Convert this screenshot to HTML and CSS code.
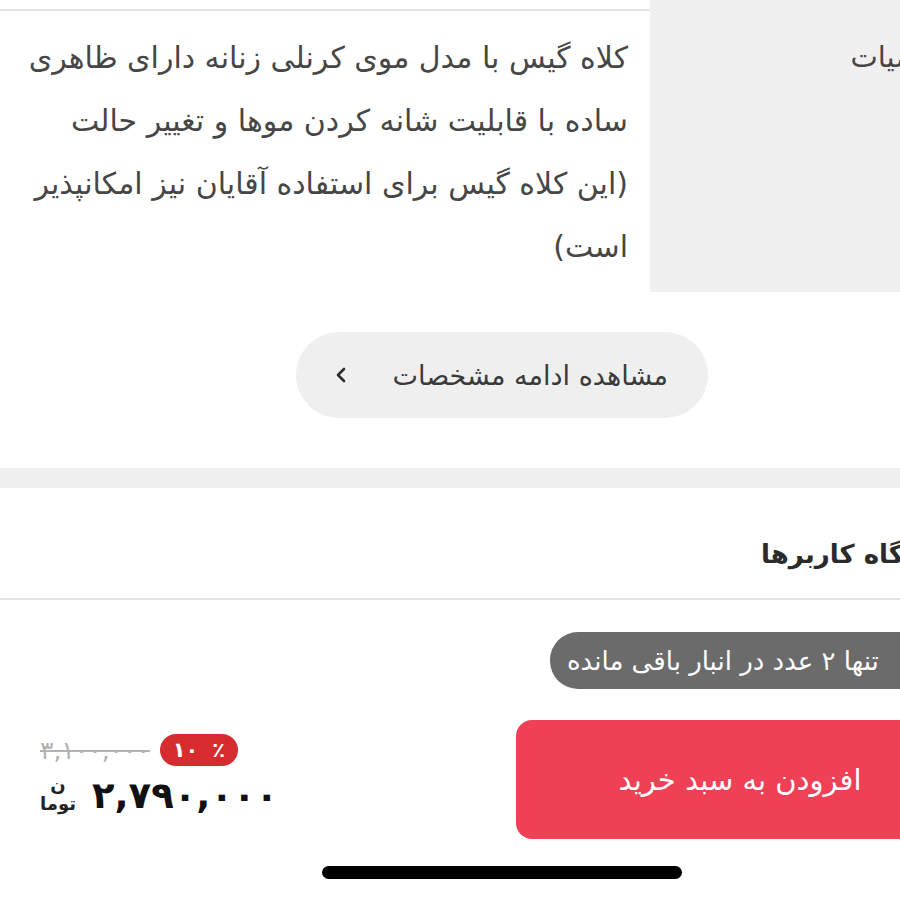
FILE: index.html
```html
<!DOCTYPE html>
<html lang="fa">
<head>
    <meta charset="UTF-8">
    <meta name="viewport" content="width=device-width, initial-scale=1.0">
    <title>کلاه گیس کرنلی زنانه</title>
    <link rel="stylesheet" href="styles.css">
</head>
<body>
    <div class="page">
        <div class="spec-row">
            <div class="spec-value">
                <p>کلاه گیس با مدل موی کرنلی زنانه دارای ظاهری<br>
                ساده با قابلیت شانه کردن موها و تغییر حالت<br>
                (این کلاه گیس برای استفاده آقایان نیز امکانپذیر<br>
                است)</p>
            </div>
            <div class="spec-title">خصوصیات</div>
        </div>

        <div class="more-wrap">
            <button class="more-btn">
                <svg width="14" height="20" viewBox="0 0 14 20"><path d="M10 4 L4 10 L10 16" fill="none" stroke="#2d2d2d" stroke-width="2.6" stroke-linecap="round" stroke-linejoin="round"/></svg>
                <span>مشاهده ادامه مشخصات</span>
            </button>
        </div>

        <div class="divider"></div>

        <div class="section-head">
            <h2>دیدگاه کاربرها</h2>
        </div>

        <div class="buy-box">
            <div class="stock-row">
                <div class="stock-badge"><span>تنها ۲ عدد در انبار باقی مانده</span></div>
            </div>
            <div class="buy-row">
                <div class="price-box">
                    <div class="old-row">
                        <span class="old-price">۳,۱۰۰,۰۰۰</span>
                        <span class="discount"><span>۱۰</span><span>٪</span></span>
                    </div>
                    <div class="new-row">
                        <span class="toman"><span>ن</span><span>توما</span></span>
                        <span class="new-price">۲,۷۹۰,۰۰۰</span>
                    </div>
                </div>
                <button class="add-btn">افزودن به سبد خرید</button>
            </div>
            <div class="home-bar"></div>
        </div>
    </div>
</body>
</html>
```

FILE: styles.css
```css
html, body {
    margin: 0;
    padding: 0;
    background-color: #fff;
    overflow: hidden;
}
body {
    width: 900px;
    height: 900px;
    font-family: "DejaVu Sans", "Noto Sans", sans-serif;
    color: #444;
}
.page {
    width: 1004px;
}
.spec-row {
    display: flex;
    height: 292px;
}
.spec-value {
    width: 650px;
    box-sizing: border-box;
    margin-top: 9px;
    border-top: 2px solid #e3e3e3;
    padding: 15px 22px 0 0;
    direction: rtl;
}
.spec-value p {
    margin: 0;
    font-size: 30px;
    line-height: 63px;
    white-space: nowrap;
    color: #464646;
}
.spec-title {
    flex: 1;
    background-color: #f0f0f0;
    direction: rtl;
    padding: 26px 26px 0 0;
    font-size: 29px;
    line-height: 63px;
    color: #464646;
}
.more-wrap {
    display: flex;
    justify-content: center;
    padding: 40px 0 50px;
}
.more-btn {
    display: flex;
    align-items: center;
    justify-content: space-between;
    width: 412px;
    height: 86px;
    box-sizing: border-box;
    padding: 0 40px 0 38px;
    border: none;
    border-radius: 43px;
    background-color: #efeff0;
    font-family: inherit;
    font-size: 27px;
    color: #3a3a3a;
}
.more-btn span {
    direction: rtl;
}
.divider {
    height: 20px;
    background-color: #f0f0f0;
}
.section-head {
    height: 112px;
    box-sizing: border-box;
    display: flex;
    align-items: center;
    justify-content: flex-end;
    padding: 22px 62px 0 40px;
    border-bottom: 2px solid #e2e2e2;
}
.section-head h2 {
    margin: 0;
    font-size: 26px;
    font-weight: bold;
    color: #2b2b2b;
    direction: rtl;
}
.buy-box {
    padding-top: 32px;
}
.stock-row {
    display: flex;
    justify-content: flex-end;
}
.stock-badge {
    width: 454px;
    height: 57px;
    box-sizing: border-box;
    padding-left: 17px;
    display: flex;
    align-items: center;
    background-color: #6b6b6b;
    color: #fff;
    font-size: 26px;
    border-radius: 28px 0 0 28px;
}
.stock-badge span {
    direction: rtl;
    white-space: nowrap;
}
.buy-row {
    display: flex;
    align-items: center;
    justify-content: space-between;
    padding: 31px 40px 0;
}
.add-btn {
    width: 448px;
    height: 119px;
    border: none;
    border-radius: 16px;
    background-color: #ef4056;
    color: #fff;
    font-family: inherit;
    font-size: 29px;
    direction: rtl;
}
.price-box {
    display: flex;
    flex-direction: column;
    align-items: flex-start;
    gap: 8px;
    margin-top: -8px;
}
.old-row {
    display: flex;
    align-items: center;
    gap: 10px;
}
.discount {
    display: flex;
    justify-content: center;
    gap: 14px;
    width: 78px;
    box-sizing: border-box;
    background-color: #d72c2f;
    color: #fff;
    font-size: 21px;
    font-weight: bold;
    height: 32px;
    line-height: 32px;
    border-radius: 16px;
}
.old-price {
    color: #b3b3b3;
    font-size: 25px;
    text-decoration: line-through;
}
.new-row {
    display: flex;
    align-items: center;
    gap: 16px;
}
.new-price {
    font-size: 37px;
    font-weight: bold;
    color: #111;
}
.toman {
    display: flex;
    flex-direction: column;
    align-items: center;
    font-size: 18px;
    font-weight: bold;
    line-height: 19px;
    color: #222;
    margin-top: -4px;
}
.home-bar {
    width: 360px;
    height: 13px;
    margin: 27px auto 0;
    background-color: #000;
    border-radius: 7px;
}
```
